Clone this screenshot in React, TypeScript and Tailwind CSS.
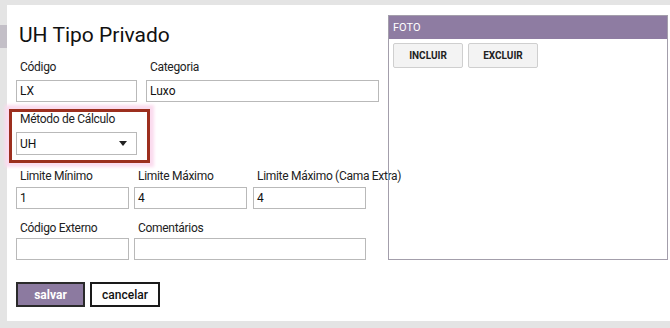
import React from "react";

const font = { fontFamily: 'Roboto, "Noto Sans", sans-serif' };

function Label({ children, className = "" }: { children: React.ReactNode; className?: string }) {
  return (
    <div className={"pl-[4px] text-[12px] tracking-[-0.3px] leading-[16px] text-[#222] h-[16px] whitespace-nowrap " + className}>
      {children}
    </div>
  );
}

function Input({ value = "", className = "" }: { value?: string; className?: string }) {
  return (
    <div
      className={
        "h-[22px] border border-[#b9b9b9] bg-white pl-[3px] text-[12px] leading-[20px] text-[#111] " + className
      }
    >
      {value}
    </div>
  );
}

export default function App() {
  return (
    <div className="w-[670px] h-[328px] bg-[#e4e4e4] flex overflow-hidden" style={font}>
      <div className="w-[7px] flex flex-col">
        <div className="h-[25px]" />
        <div className="h-[23px] bg-[#c3bfc7]" />
      </div>
      <div className="flex-1 flex flex-col pt-[5px]">
        <div className="bg-white h-[316px] flex pl-[9px]">
          {/* left form */}
          <div className="w-[371px] flex flex-col">
            <div className="mt-[16px] pl-[3px] text-[21px] leading-[28px] text-[#111]">UH Tipo Privado</div>
            <div className="mt-[10px] flex gap-[9px]">
              <div className="w-[121px] flex flex-col">
                <Label>Código</Label>
                <Input value="LX" className="mt-[5px]" />
              </div>
              <div className="w-[233px] flex flex-col">
                <Label>Categoria</Label>
                <Input value="Luxo" className="mt-[5px]" />
              </div>
            </div>
            <div className="mt-[9px] relative w-[121px] flex flex-col">
              <div className="absolute left-[-7px] top-[-2px] w-[141px] h-[54px] border-[3px] border-[#9c2f1e] shadow-[0_0_3px_4px_#fbdcef]" />
              <Label className="relative">Método de Cálculo</Label>
              <div className="relative mt-[5px] h-[23px] border border-[#b9b9b9] bg-white pl-[3px] pr-[9px] flex items-center justify-between text-[12px] text-[#111]">
                <span>UH</span>
                <svg width="8" height="5" viewBox="0 0 8 5">
                  <path d="M0 0 H8 L4 5 Z" fill="#222" />
                </svg>
              </div>
            </div>
            <div className="mt-[13px] flex gap-[5px]">
              <div className="w-[113px] flex flex-col">
                <Label>Limite Mínimo</Label>
                <Input value="1" className="mt-[3px]" />
              </div>
              <div className="w-[113px] flex flex-col">
                <Label>Limite Máximo</Label>
                <Input value="4" className="mt-[3px]" />
              </div>
              <div className="w-[113px] flex flex-col ml-[1px]">
                <Label>Limite Máximo (Cama Extra)</Label>
                <Input value="4" className="mt-[3px]" />
              </div>
            </div>
            <div className="mt-[11px] flex gap-[5px]">
              <div className="w-[113px] flex flex-col">
                <Label>Código Externo</Label>
                <Input className="mt-[2px]" />
              </div>
              <div className="w-[232px] flex flex-col">
                <Label>Comentários</Label>
                <Input className="mt-[2px]" />
              </div>
            </div>
            <div className="mt-[22px] flex gap-[5px]">
              <button className="w-[69px] h-[25px] bg-[#8c7aa0] border-2 border-[#2a2a2a] text-white text-[12px] font-bold leading-none">
                salvar
              </button>
              <button className="w-[70px] h-[25px] bg-white border-2 border-[#1a1a1a] text-[#111] text-[12px] font-medium leading-none">
                cancelar
              </button>
            </div>
          </div>
          {/* foto panel */}
          <div className="ml-[1px] mt-[10px] w-[280px] h-[245px] border border-[#a39eab] flex flex-col">
            <div className="h-[23px] bg-[#8e7ca2] text-white text-[11px] leading-[23px] pl-[4px]">FOTO</div>
            <div className="flex gap-[5px] pl-[4px] pt-[4px]">
              <button className="w-[70px] h-[25px] bg-[#f3f3f3] border border-[#cfcfcf] rounded-[2px] text-[10px] font-bold text-[#222]">
                INCLUIR
              </button>
              <button className="w-[70px] h-[25px] bg-[#f3f3f3] border border-[#cfcfcf] rounded-[2px] text-[10px] font-bold text-[#222]">
                EXCLUIR
              </button>
            </div>
          </div>
        </div>
      </div>
    </div>
  );
}
